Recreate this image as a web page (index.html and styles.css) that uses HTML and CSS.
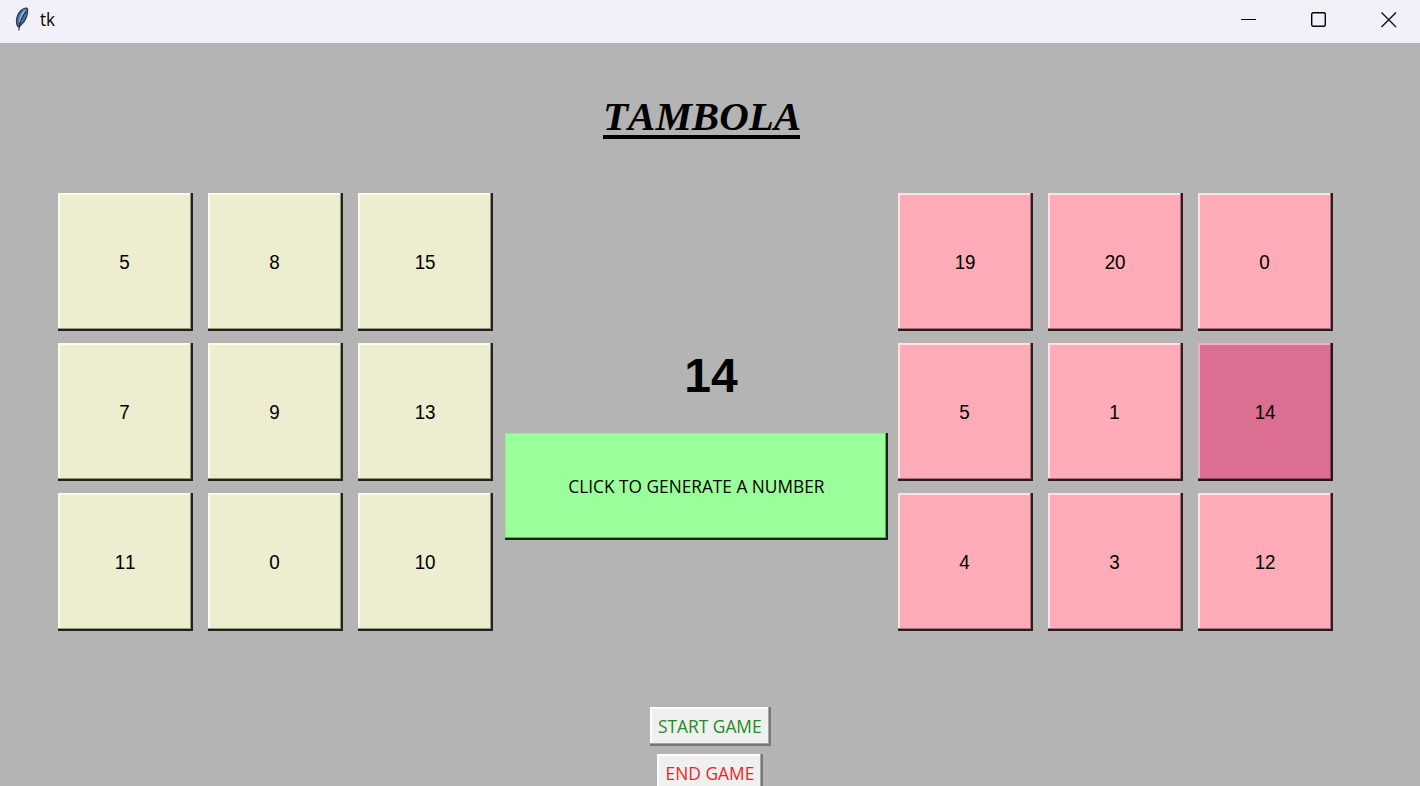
FILE: index.html
```
<!DOCTYPE html>
<html lang="en">
<head>
<meta charset="utf-8">
<title>tk</title>
<link rel="stylesheet" href="styles.css">
</head>
<body>
<header class="titlebar">
  <svg class="feather" width="16" height="26" viewBox="0 0 16 26">
    <path d="M3.5 20C1.5 15 3 9 7 4.500C9 2.500 13 1 13.500 3C14 8 12 15 6.500 19.500L5 21Z" fill="#3f74ab" stroke="#353b45" stroke-width="1.3"/>
    <path d="M6 16C6.500 11 8 7.500 11.500 4.500" fill="none" stroke="#8fb8e0" stroke-width="2.200"/>
    <path d="M4.800 24.500C5 18 8 11 12 5" fill="none" stroke="#22262e" stroke-width="1.1"/>
  </svg>
  <span class="window-title">tk</span>
  <div class="controls">
    <svg width="16" height="16" viewBox="0 0 16 16"><path d="M0 7.500H15" stroke="#000" stroke-width="1"/></svg>
    <svg width="16" height="16" viewBox="0 0 16 16"><rect x=".7" y=".7" width="13.600" height="13.600" rx="1.500" fill="none" stroke="#000" stroke-width="1.400"/></svg>
    <svg width="16" height="16" viewBox="0 0 16 16"><path d="M.5 .5L15 15M15 .5L.5 15" stroke="#111" stroke-width="1.400"/></svg>
  </div>
</header>
<main class="window">
  <h1 class="heading"><span class="heading-text">TAMBOLA</span></h1>
  <div class="game">
    <div class="board cream">
      <button class="tile"><span>5</span></button><button class="tile"><span>8</span></button><button class="tile"><span>15</span></button>
      <button class="tile"><span>7</span></button><button class="tile"><span>9</span></button><button class="tile"><span>13</span></button>
      <button class="tile"><span>11</span></button><button class="tile"><span>0</span></button><button class="tile"><span>10</span></button>
    </div>
    <div class="center">
      <div class="drawn">14</div>
      <button class="generate"><span>CLICK TO GENERATE A NUMBER</span></button>
    </div>
    <div class="board pink">
      <button class="tile"><span>19</span></button><button class="tile"><span>20</span></button><button class="tile"><span>0</span></button>
      <button class="tile"><span>5</span></button><button class="tile"><span>1</span></button><button class="tile marked"><span>14</span></button>
      <button class="tile"><span>4</span></button><button class="tile"><span>3</span></button><button class="tile"><span>12</span></button>
    </div>
  </div>
  <div class="actions">
    <button class="action start"><span>START GAME</span></button>
    <button class="action end"><span>END GAME</span></button>
  </div>
</main>
</body>
</html>
```
FILE: styles.css
```
* { box-sizing: border-box; }
body { margin: 0; width: 1420px; height: 786px; overflow: hidden; background: #b4b4b4; color: #000; }
button { display: flex; align-items: center; justify-content: center; padding: 0; margin: 0; border: 0; border-radius: 0; color: #000; white-space: nowrap; }
button span { display: block; flex: none; }
.titlebar { height: 43px; padding: 0 23px 4px 14px; display: flex; align-items: center; background: #f2f1f9; }
.feather { flex: none; margin-top: -1px; }
.window-title { margin: -2px 0 0 10px; font: 18px/24px "Open Sans", sans-serif; transform: scaleX(.95); transform-origin: left; }
.controls { margin-left: auto; display: flex; gap: 54px; }
.controls svg { display: block; }
.window { height: 743px; overflow: hidden; }
.heading { margin: 0; height: 150px; padding: 49px 0 0 603px; font: italic bold 41px/48px "Liberation Serif", serif; font-kerning: none; }
.heading-text { display: block; width: 197px; height: 47px; border-bottom: 4px solid #000; white-space: nowrap; }
.game { display: grid; grid-template-columns: 435px 405px 435px; margin-left: 58px; height: 438px; }
.board { display: grid; grid-template-columns: repeat(3, 135px); grid-auto-rows: 138px; gap: 12px 15px; }
.tile { padding-right: 1px; font: 20px/24px "Liberation Sans", Arial, sans-serif; font-kerning: none; }
.tile span { transform: scaleX(.94); }
.cream .tile { background: #ededd0; box-shadow: inset -2px -2px #22221b, inset -3px -3px #96967f, inset 2px 2px #fbfbee; }
.pink .tile { background: #ffacb8; box-shadow: inset -2px -2px #2e1b20, inset -3px -3px #a96f78, inset 2px 2px #ffe2e6; }
.pink .marked { background: #dc6f91; box-shadow: inset -2px -2px #2a131d, inset -3px -3px #8c485d, inset 2px 2px #f8adc4; }
.center { padding: 154px 10px 0 12px; }
.drawn { height: 86px; padding-left: 29px; text-align: center; font: bold 48px/58px "Liberation Sans", Arial, sans-serif; }
.generate { width: 383px; height: 107px; padding-bottom: 2px; background: #9aff9a; box-shadow: inset -2px -2px #14251a, inset -3px -3px #64a565, inset 1px 1px #8eee90; font: 18px/24px "Open Sans", sans-serif; }
.generate span { transform: scaleX(.96); }
.actions { display: flex; flex-direction: column; align-items: center; gap: 8px; padding-top: 76px; }
.action { height: 39px; padding-bottom: 2px; background: #f0f0f0; box-shadow: inset -2px -2px #777, inset -3px -3px #a5a5a5, inset 2px 2px #fff; font: 18px/24px "Open Sans", sans-serif; }
.action span { transform: scaleX(.965); }
.start { width: 121px; color: #228b22; }
.end { width: 106px; color: #f51c28; }
```
